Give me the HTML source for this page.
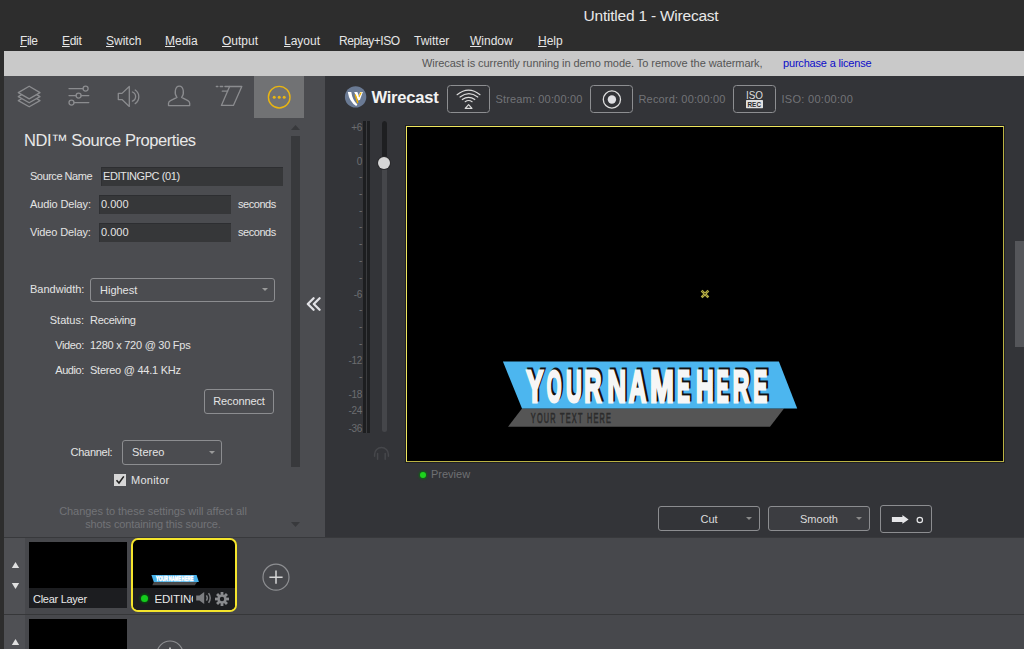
<!DOCTYPE html>
<html><head><meta charset="utf-8">
<style>
*{margin:0;padding:0;box-sizing:border-box}
html,body{width:1024px;height:649px;overflow:hidden;background:#333438;font-family:"Liberation Sans",sans-serif;}
.a{position:absolute}
.t{position:absolute;white-space:nowrap;line-height:1}
#top{left:0;top:0;width:1024px;height:51px;background:#2d2d2d}
#title{left:0;width:1024px;top:7.6px;text-align:center;padding-left:278px;color:#e8e8e8;font-size:15.5px;letter-spacing:-0.22px}
.menu{top:35px;color:#e6e6e6;font-size:12px}
.menu u{text-decoration:underline;text-decoration-thickness:1px;text-underline-offset:1px}
#lstrip{left:0;top:51px;width:4px;height:598px;background:#2d2d2d}
#banner{left:4px;top:51px;width:1020px;height:25px;background:#c9c9c9}
#lp{left:4px;top:76px;width:321px;height:461px;background:#4b4c50}
#bottom{left:4px;top:537px;width:1020px;height:112px;background:#47484c}
.lbl{color:#e4e4e4;font-size:11px}
.inp{background:#363739;border-top:1px solid #2d2e31;border-left:1px solid #2f3033}
.dd{border:1px solid #8c8d90;border-radius:3px}
.btn{border:1px solid #8c8d90;border-radius:3px}
</style></head><body>
<div id="top" class="a"></div>
<div id="title" class="t">Untitled 1 - Wirecast</div>
<div class="t menu" style="left:20px;letter-spacing:-0.45px"><u>F</u>ile</div>
<div class="t menu" style="left:62px;letter-spacing:-0.3px"><u>E</u>dit</div>
<div class="t menu" style="left:106px"><u>S</u>witch</div>
<div class="t menu" style="left:165px"><u>M</u>edia</div>
<div class="t menu" style="left:222px"><u>O</u>utput</div>
<div class="t menu" style="left:284px"><u>L</u>ayout</div>
<div class="t menu" style="left:339px;letter-spacing:-0.44px">Replay+ISO</div>
<div class="t menu" style="left:414px">Twitter</div>
<div class="t menu" style="left:470px"><u>W</u>indow</div>
<div class="t menu" style="left:538px"><u>H</u>elp</div>

<div id="lstrip" class="a"></div>
<div id="banner" class="a"></div>
<div class="t" style="left:422px;top:57.5px;font-size:11px;color:#555;letter-spacing:-0.06px">Wirecast is currently running in demo mode. To remove the watermark,</div>
<div class="t" style="left:783px;top:57.5px;font-size:11px;color:#0c0cc8;letter-spacing:-0.18px">purchase a license</div>

<div id="lp" class="a"></div>



<!-- tab icons -->
<svg class="a" style="left:0;top:76px" width="325" height="42" viewBox="0 76 325 42">
 <g fill="none" stroke="#8b8c8f" stroke-width="1.3" stroke-linejoin="round" stroke-linecap="round">
  <path d="M29.2 86.2 L40 92.6 L29.2 98.9 L18.3 92.6 Z"/>
  <path d="M21.6 94.6 L18.3 96.6 L29.2 102.8 L40 96.6 L36.8 94.6"/>
  <path d="M21.6 98.7 L18.3 100.6 L29.2 106.8 L40 100.6 L36.8 98.7"/>
  <path d="M69 88.6 H83.1 M69 95.6 H76.1 M81.1 95.6 H88.8 M74 102.6 H88.8"/>
  <circle cx="85.6" cy="88.6" r="2.5"/><circle cx="78.6" cy="95.6" r="2.5"/><circle cx="71.5" cy="102.6" r="2.5"/>
  <path d="M118.3 93.4 H122 L129.3 86.5 V106.4 L122 99.6 H118.3 Z"/>
  <path d="M132.4 92 A4.9 4.9 0 0 1 132.4 101.2"/>
  <path d="M135.2 90 A8.2 8.2 0 0 1 135.2 103.6"/>
  
  <path d="M177 97.4 C174.2 94.6 174.6 86.1 179.3 86.1 C184 86.1 184.4 94.6 181.6 97.4 L187.9 100.6 Q189.7 101.6 189.7 103.2 V105.6 H168.5 V103.2 Q168.5 101.6 170.5 100.6 Z"/>
  <path d="M229.6 86.5 H241.8 L233.4 105.4 H221.4 Z"/><path d="M222.3 91.2 H227.6"/>
  <path d="M216.4 86.5 H217.8 M220.3 86.5 H222.6 M225 86.5 H229.6" stroke-width="1.5"/>
 </g>
 <rect x="254" y="76" width="50" height="42" fill="#717274"/>
 <circle cx="279.2" cy="97.2" r="10.8" fill="none" stroke="#e9b512" stroke-width="1.4"/>
 <circle cx="274.2" cy="97.3" r="1.5" fill="#e9b512"/><circle cx="279.2" cy="97.3" r="1.5" fill="#e9b512"/><circle cx="284.2" cy="97.3" r="1.5" fill="#e9b512"/>
</svg>
<!-- scrollbar -->
<svg class="a" style="left:288px;top:120px" width="16" height="420">
 <path d="M3 10 L7.5 5 L12 10 Z" fill="#38393c"/>
 <rect x="3" y="16" width="9" height="331" fill="#38393c"/>
 <path d="M3 402 L12 402 L7.5 407 Z" fill="#38393c"/>
</svg>
<svg class="a" style="left:300px;top:290px" width="25" height="26" viewBox="300 290 25 26"><path d="M313.6 298.2 L307.8 304 L313.6 309.8 M319.6 298.2 L313.8 304 L319.6 309.8" fill="none" stroke="#e2e2e6" stroke-width="2.3" stroke-linecap="round" stroke-linejoin="round"/></svg>

<div class="t" style="left:24px;top:132px;font-size:16px;color:#e8e8e8;font-size:16.5px;letter-spacing:-0.45px;top:131.5px">NDI&trade; Source Properties</div>
<div class="t lbl" style="left:30px;top:171px;letter-spacing:-0.47px">Source Name</div>
<div class="a inp" style="left:101px;top:167px;width:182px;height:19px"></div>
<div class="t lbl" style="left:103px;top:171px;letter-spacing:-0.42px">EDITINGPC (01)</div>
<div class="t lbl" style="left:30px;top:199px;letter-spacing:-0.12px">Audio Delay:</div>
<div class="a inp" style="left:99px;top:195px;width:132px;height:19px"></div>
<div class="t lbl" style="left:101px;top:199px">0.000</div>
<div class="t lbl" style="left:238px;top:199px;letter-spacing:-0.45px">seconds</div>
<div class="t lbl" style="left:30px;top:227px;letter-spacing:-0.12px">Video Delay:</div>
<div class="a inp" style="left:99px;top:223px;width:132px;height:19px"></div>
<div class="t lbl" style="left:101px;top:227px">0.000</div>
<div class="t lbl" style="left:238px;top:227px;letter-spacing:-0.45px">seconds</div>

<div class="t lbl" style="left:30px;top:284px">Bandwidth:</div>
<div class="a dd" style="left:90px;top:278px;width:185px;height:24px"></div>
<div class="t lbl" style="left:100px;top:285px">Highest</div>
<svg class="a" style="left:262px;top:288px" width="6" height="4"><path d="M0 0 H6 L3 3 Z" fill="#9a9a9a"/></svg>

<div class="t lbl" style="left:0;width:84px;text-align:right;top:315px">Status:</div>
<div class="t lbl" style="left:90px;top:315px;letter-spacing:-0.3px">Receiving</div>
<div class="t lbl" style="left:0;width:84px;text-align:right;letter-spacing:-0.3px;top:340px;letter-spacing:-0.38px">Video:</div>
<div class="t lbl" style="left:90px;top:340px;letter-spacing:-0.26px">1280 x 720 @ 30 Fps</div>
<div class="t lbl" style="left:0;width:84px;text-align:right;letter-spacing:-0.3px;top:365px;letter-spacing:-0.4px">Audio:</div>
<div class="t lbl" style="left:90px;top:365px;letter-spacing:-0.25px">Stereo @ 44.1 KHz</div>

<div class="a btn" style="left:204px;top:389px;width:70px;height:25px"></div>
<div class="t lbl" style="left:204px;width:70px;text-align:center;top:396px;letter-spacing:-0.1px">Reconnect</div>

<div class="t lbl" style="left:0;width:112.4px;text-align:right;top:447px;letter-spacing:-0.28px">Channel:</div>
<div class="a dd" style="left:122px;top:440px;width:100px;height:25px"></div>
<div class="t lbl" style="left:132px;top:447px">Stereo</div>
<svg class="a" style="left:209px;top:451px" width="6" height="4"><path d="M0 0 H6 L3 3 Z" fill="#9a9a9a"/></svg>

<div class="a" style="left:114px;top:474px;width:12px;height:12px;background:#d6d6d6"></div>
<svg class="a" style="left:114px;top:474px" width="12" height="12"><path d="M2.5 6.2 L5 9 L9.8 2.4" fill="none" stroke="#222" stroke-width="1.6"/></svg>
<div class="t lbl" style="left:131px;top:475px;letter-spacing:0.25px">Monitor</div>

<div class="t lbl" style="left:0;width:306px;text-align:center;top:506px;color:#727377;letter-spacing:-0.04px">Changes to these settings will affect all</div>
<div class="t lbl" style="left:0;width:306px;text-align:center;top:519px;color:#727377;letter-spacing:-0.11px;top:518.5px">shots containing this source.</div>


<!-- top toolbar -->
<svg class="a" style="left:340px;top:80px" width="540" height="36" viewBox="340 80 540 36">
 <circle cx="355.6" cy="96.9" r="10.7" fill="#6a7a94"/>
 <path d="M347.8 92 L351.3 92 Q352.4 100.2 357.4 104.4 L356.2 106 Q349.2 101.8 347.8 92 Z" fill="#fff"/>
 <path d="M354.2 92 L357.4 92 L360.2 99.8 L358.2 100.6 Z" fill="#fff"/>
 <path d="M354.5 94.6 L355.9 94.6 L358.4 102.6 L357.2 103.6 Z" fill="#f2b300"/>
 <path d="M360 92 L362.9 92 L359.9 100 L357.9 99.6 Z" fill="#fff"/>
 <path d="M360.3 92.6 L361.8 92.6 L359.3 97.6 L358.6 96.6 Z" fill="#f2b300"/>
 <rect x="447.5" y="85.5" width="42" height="27" rx="3" fill="none" stroke="#8d8e91" stroke-width="1"/>
 <g fill="none" stroke="#dcdcdc" stroke-width="1.2" stroke-linecap="round">
  <path d="M457.1 94.7 Q468.6 85.6 480 94.7"/>
  <path d="M460 97 Q468.9 90.1 477.8 97"/>
  <path d="M462.3 99.5 Q468.6 95.1 474.8 99.5"/>
  <path d="M465.2 101.7 Q468.6 99.3 472.1 101.7"/>
 </g>
 <path d="M468.6 104.6 L472 108.3 H465.2 Z" fill="none" stroke="#dcdcdc" stroke-width="1.2" stroke-linejoin="round"/>
 <rect x="590.5" y="85.5" width="42" height="27" rx="3" fill="none" stroke="#8d8e91" stroke-width="1"/>
 <circle cx="611.9" cy="99.5" r="8.6" fill="none" stroke="#dcdcdc" stroke-width="1.3"/>
 <circle cx="611.9" cy="99.5" r="4.2" fill="#e0e0e4"/>
 <rect x="733.5" y="85.5" width="42" height="27" rx="3" fill="none" stroke="#8d8e91" stroke-width="1"/>
 <rect x="746" y="100" width="17" height="8.2" rx="0.6" fill="#e0e0e0"/>
</svg>
<div class="t" style="left:371.4px;top:89.8px;font-size:16.6px;font-weight:bold;color:#f2f2f2;letter-spacing:-0.25px">Wirecast</div>
<div class="t" style="left:745.6px;top:90.1px;font-size:11.5px;color:#dedede;transform:scaleX(0.86);transform-origin:0 0">ISO</div>
<div class="t" style="left:747.5px;top:101.6px;font-size:6.4px;font-weight:bold;color:#2a2a2c">REC</div>
<div class="t" style="left:495.5px;top:94px;font-size:11px;color:#727377;letter-spacing:0.16px">Stream: 00:00:00</div>
<div class="t" style="left:638.5px;top:94px;font-size:11px;color:#727377;letter-spacing:0.16px">Record: 00:00:00</div>
<div class="t" style="left:781.5px;top:94px;font-size:11px;color:#727377;letter-spacing:0.29px">ISO: 00:00:00</div>

<!-- audio meter -->
<div class="a" style="left:363px;top:121px;width:7px;height:312px;background:#1d1e20"></div>
<div class="a" style="left:366px;top:121px;width:1px;height:312px;background:#3a3b3e"></div>
<div class="a" style="left:382px;top:121px;width:5px;height:311px;border-radius:2.5px;background:#45464a"></div>
<div class="a" style="left:382px;top:121px;width:5px;height:42px;border-radius:2.5px 2.5px 0 0;background:#1e1f21"></div>
<div class="a" style="left:377.7px;top:156.6px;width:12.2px;height:12.2px;border-radius:50%;background:#d6d6d6;box-shadow:0 0 0 1px #2a2a2c"></div>
<div class="t" style="left:300px;width:62px;text-align:right;letter-spacing:-0.3px;top:122.8px;font-size:10px;color:#6c6d70">+6</div>
<div class="t" style="left:300px;width:62px;text-align:right;letter-spacing:-0.3px;top:139.1px;font-size:10px;color:#6c6d70">-</div>
<div class="t" style="left:300px;width:62px;text-align:right;letter-spacing:-0.3px;top:156.7px;font-size:10px;color:#6c6d70">0</div>
<div class="t" style="left:300px;width:62px;text-align:right;letter-spacing:-0.3px;top:171.9px;font-size:10px;color:#6c6d70">-</div>
<div class="t" style="left:300px;width:62px;text-align:right;letter-spacing:-0.3px;top:188.5px;font-size:10px;color:#6c6d70">-</div>
<div class="t" style="left:300px;width:62px;text-align:right;letter-spacing:-0.3px;top:205.7px;font-size:10px;color:#6c6d70">-</div>
<div class="t" style="left:300px;width:62px;text-align:right;letter-spacing:-0.3px;top:222.3px;font-size:10px;color:#6c6d70">-</div>
<div class="t" style="left:300px;width:62px;text-align:right;letter-spacing:-0.3px;top:239.3px;font-size:10px;color:#6c6d70">-</div>
<div class="t" style="left:300px;width:62px;text-align:right;letter-spacing:-0.3px;top:255.6px;font-size:10px;color:#6c6d70">-</div>
<div class="t" style="left:300px;width:62px;text-align:right;letter-spacing:-0.3px;top:272.5px;font-size:10px;color:#6c6d70">-</div>
<div class="t" style="left:300px;width:62px;text-align:right;letter-spacing:-0.3px;top:290.1px;font-size:10px;color:#6c6d70">-6</div>
<div class="t" style="left:300px;width:62px;text-align:right;letter-spacing:-0.3px;top:305.3px;font-size:10px;color:#6c6d70">-</div>
<div class="t" style="left:300px;width:62px;text-align:right;letter-spacing:-0.3px;top:321.8px;font-size:10px;color:#6c6d70">-</div>
<div class="t" style="left:300px;width:62px;text-align:right;letter-spacing:-0.3px;top:338.8px;font-size:10px;color:#6c6d70">-</div>
<div class="t" style="left:300px;width:62px;text-align:right;letter-spacing:-0.3px;top:356.2px;font-size:10px;color:#6c6d70">-12</div>
<div class="t" style="left:300px;width:62px;text-align:right;letter-spacing:-0.3px;top:372.2px;font-size:10px;color:#6c6d70">-</div>
<div class="t" style="left:300px;width:62px;text-align:right;letter-spacing:-0.3px;top:390.1px;font-size:10px;color:#6c6d70">-18</div>
<div class="t" style="left:300px;width:62px;text-align:right;letter-spacing:-0.3px;top:406.0px;font-size:10px;color:#6c6d70">-24</div>
<div class="t" style="left:300px;width:62px;text-align:right;letter-spacing:-0.3px;top:423.8px;font-size:10px;color:#6c6d70">-36</div>
<svg class="a" style="left:368px;top:440px" width="28" height="26" viewBox="368 440 28 26"><path d="M374.6 456.2 V454.4 A6.9 6.9 0 0 1 388.4 454.4 V456.2" fill="none" stroke="#46474b" stroke-width="1.5" stroke-linecap="round"/><path d="M377.6 453.6 V459.2 M385.2 453.6 V459.2" stroke="#46474b" stroke-width="1.5" stroke-linecap="round"/></svg>

<!-- preview -->
<div class="a" style="left:405px;top:125px;width:600px;height:338px;border:1px solid #1f2022"></div>
<div class="a" style="left:406px;top:126px;width:598px;height:336px;background:#000;border:1px solid #efe65e;border-right-color:#bab244;border-bottom-color:#bab244"></div>
<svg class="a" style="left:700px;top:289px" width="10" height="10"><path d="M1.6 1.6 L8.4 8.4 M8.4 1.6 L1.6 8.4" stroke="#b4ac44" stroke-width="2.6"/><path d="M2.4 2.4 L7.6 7.6 M7.6 2.4 L2.4 7.6" stroke="#2a2a10" stroke-width="0.8" stroke-dasharray="1.2 1.2"/></svg>

<svg class="a" style="left:490px;top:350px" width="320" height="90" viewBox="490 350 320 90">
 <polygon points="522,408.5 784,408.5 770,426.8 508,426.8" fill="#555555"/>
 <polygon points="502.9,361.6 778.9,361.6 797.2,408.5 522,408.5" fill="#4cb6ef"/>
</svg>
<svg class="a" style="left:0;top:0" width="1024" height="649" viewBox="0 0 1024 649"><g transform="translate(530.8 423.4) scale(0.5 1)"><text font-family="Liberation Sans" font-size="14.6" letter-spacing="2.45" word-spacing="0.4" fill="#2c2c2c" stroke="#2c2c2c" stroke-width="0.5" vector-effect="non-scaling-stroke">YOUR TEXT HERE</text></g></svg>
<svg class="a" style="left:0;top:0" width="1024" height="649" viewBox="0 0 1024 649"><g font-family="Liberation Sans" font-weight="bold" font-size="44" fill="#111" stroke="#111" stroke-width="2.4"><g transform="translate(527.94 400.30) scale(0.583 1)"><text vector-effect="non-scaling-stroke">Y</text></g><g transform="translate(548.60 400.30) scale(0.432 1)"><text vector-effect="non-scaling-stroke">O</text></g><g transform="translate(567.69 400.30) scale(0.495 1)"><text vector-effect="non-scaling-stroke">U</text></g><g transform="translate(585.93 400.30) scale(0.540 1)"><text vector-effect="non-scaling-stroke">R</text></g><g transform="translate(609.08 400.30) scale(0.591 1)"><text vector-effect="non-scaling-stroke">N</text></g><g transform="translate(630.67 400.30) scale(0.553 1)"><text vector-effect="non-scaling-stroke">A</text></g><g transform="translate(651.91 400.30) scale(0.649 1)"><text vector-effect="non-scaling-stroke">M</text></g><g transform="translate(678.83 400.30) scale(0.437 1)"><text vector-effect="non-scaling-stroke">E</text></g><g transform="translate(697.69 400.30) scale(0.553 1)"><text vector-effect="non-scaling-stroke">H</text></g><g transform="translate(718.20 400.30) scale(0.412 1)"><text vector-effect="non-scaling-stroke">E</text></g><g transform="translate(734.48 400.30) scale(0.522 1)"><text vector-effect="non-scaling-stroke">R</text></g><g transform="translate(755.13 400.30) scale(0.473 1)"><text vector-effect="non-scaling-stroke">E</text></g></g><g font-family="Liberation Sans" font-weight="bold" font-size="44" fill="#f6f6f6" stroke="#f6f6f6" stroke-width="2.4"><g transform="translate(526.14 402.10) scale(0.583 1)"><text vector-effect="non-scaling-stroke">Y</text></g><g transform="translate(546.80 402.10) scale(0.432 1)"><text vector-effect="non-scaling-stroke">O</text></g><g transform="translate(565.89 402.10) scale(0.495 1)"><text vector-effect="non-scaling-stroke">U</text></g><g transform="translate(584.13 402.10) scale(0.540 1)"><text vector-effect="non-scaling-stroke">R</text></g><g transform="translate(607.28 402.10) scale(0.591 1)"><text vector-effect="non-scaling-stroke">N</text></g><g transform="translate(628.87 402.10) scale(0.553 1)"><text vector-effect="non-scaling-stroke">A</text></g><g transform="translate(650.11 402.10) scale(0.649 1)"><text vector-effect="non-scaling-stroke">M</text></g><g transform="translate(677.03 402.10) scale(0.437 1)"><text vector-effect="non-scaling-stroke">E</text></g><g transform="translate(695.89 402.10) scale(0.553 1)"><text vector-effect="non-scaling-stroke">H</text></g><g transform="translate(716.40 402.10) scale(0.412 1)"><text vector-effect="non-scaling-stroke">E</text></g><g transform="translate(732.68 402.10) scale(0.522 1)"><text vector-effect="non-scaling-stroke">R</text></g><g transform="translate(753.33 402.10) scale(0.473 1)"><text vector-effect="non-scaling-stroke">E</text></g></g></svg>
<div class="a" style="left:420px;top:471.5px;width:6px;height:6px;border-radius:50%;background:#1ed21e;box-shadow:0 0 2px 1px #0a6a10"></div>
<div class="t" style="left:431px;top:469px;font-size:11px;color:#6f7073">Preview</div>

<div class="a" style="left:1015px;top:241px;width:9px;height:106px;background:#55565a"></div>

<!-- transitions -->
<div class="a btn" style="left:658px;top:506px;width:102px;height:25px;background:#333438"></div>
<div class="t lbl" style="left:658px;width:102px;text-align:center;top:513px;padding-right:0px;color:#dcdcdc;top:513.7px">Cut</div>
<svg class="a" style="left:746px;top:517px" width="6" height="4"><path d="M0 0 H6 L3 3 Z" fill="#8a8a8a"/></svg>
<div class="a btn" style="left:768px;top:506px;width:102px;height:25px;background:#3c3d41"></div>
<div class="t lbl" style="left:768px;width:102px;text-align:center;top:513px;color:#dcdcdc;top:513.7px">Smooth</div>
<svg class="a" style="left:856px;top:517px" width="6" height="4"><path d="M0 0 H6 L3 3 Z" fill="#8a8a8a"/></svg>
<div class="a btn" style="left:880px;top:505px;width:52px;height:28px"></div>
<svg class="a" style="left:880px;top:505px" width="52" height="28"><path d="M11.9 12 H22.4 V10 L28.6 14.4 L22.4 18.8 V16.9 H11.9 Z" fill="#e6e6e8"/><circle cx="39.8" cy="15" r="2.7" fill="none" stroke="#e6e6e8" stroke-width="1.2"/></svg>


<div id="bottom" class="a"></div>
<div class="a" style="left:4px;top:537px;width:1020px;height:1px;background:#38393c"></div>
<div class="a" style="left:4px;top:538px;width:21px;height:76px;background:#4f5054"></div>
<div class="a" style="left:4px;top:614px;width:1020px;height:1px;background:#363739"></div>
<div class="a" style="left:4px;top:615px;width:21px;height:34px;background:#4f5054"></div>
<svg class="a" style="left:0;top:540px" width="30" height="109">
 <path d="M11.8 28 L15.5 22 L19.2 28 Z" fill="#e0e0e0"/>
 <path d="M11.8 43 L19.2 43 L15.5 49 Z" fill="#e0e0e0"/>
 <path d="M11.8 105 L15.5 99 L19.2 105 Z" fill="#e0e0e0"/>
</svg>
<div class="a" style="left:29px;top:542px;width:98px;height:66px;background:#000"></div>
<div class="a" style="left:29px;top:588px;width:98px;height:20px;background:#1c1d20"></div>
<div class="t" style="left:33px;top:593px;font-size:11px;color:#e8e8e8;letter-spacing:-0.28px;top:594px">Clear Layer</div>
<div class="a" style="left:29px;top:619px;width:98px;height:30px;background:#000"></div>

<div class="a" style="left:131px;top:538px;width:105.5px;height:73.6px;border:2.6px solid #f4e42c;border-radius:7px;background:#000;overflow:hidden">
  <div class="a" style="left:0;top:47.6px;width:102px;height:23px;background:#1c1d20"></div>
</div>
<svg class="a" style="left:140px;top:570px" width="70" height="20" viewBox="140 570 70 20">
 <polygon points="153.8,582.1 197.1,582.1 194.8,585.3 152.3,585.3" fill="#4a4a4a"/>
 <polygon points="151.4,575 196.6,575 198.9,582.1 153.8,582.1" fill="#47b1ea"/>
</svg>
<svg class="a" style="left:0;top:0" width="1024" height="649" viewBox="0 0 1024 649"><g transform="translate(156 581.4) scale(0.6 1)"><text font-family="Liberation Sans" font-weight="bold" font-size="7" word-spacing="-1" fill="#ffffff" stroke="#ffffff" stroke-width="0.5" vector-effect="non-scaling-stroke">YOUR NAME HERE</text></g></svg>
<div class="a" style="left:141px;top:594.6px;width:7px;height:7px;border-radius:50%;background:#14cc1c;box-shadow:0 0 2px 1.5px #0a4a10"></div>
<div class="a" style="left:154.5px;top:592px;width:38.5px;height:15px;overflow:hidden"><div class="t" style="left:0;top:1.6px;font-size:11.5px;color:#e8e8e8;letter-spacing:-0.2px">EDITINGPC</div></div>
<svg class="a" style="left:194px;top:589px" width="40" height="18">
 <path d="M2.2 6.6 H5.4 L10.2 3 V15 L5.4 11.4 H2.2 Z" fill="#7c7d80"/>
 <path d="M12.4 6.4 Q14.2 9 12.4 11.6 M14.6 4.2 Q17.8 9 14.6 13.8" fill="none" stroke="#7c7d80" stroke-width="1.5"/>
 <g transform="translate(28 10.00)" fill="#8a8b8e">
  <circle r="4.6"/>
  <g id="teeth"><rect x="-1.4" y="-7" width="2.8" height="14"/><rect x="-1.4" y="-7" width="2.8" height="14" transform="rotate(45)"/><rect x="-1.4" y="-7" width="2.8" height="14" transform="rotate(90)"/><rect x="-1.4" y="-7" width="2.8" height="14" transform="rotate(135)"/></g>
  <circle r="2.2" fill="#1c1d20"/>
 </g>
</svg>
<svg class="a" style="left:260px;top:562px" width="32" height="32"><circle cx="16" cy="15.2" r="13" fill="none" stroke="#8e8f92" stroke-width="1.2"/><path d="M16 8.6 V21.8 M9.4 15.2 H22.6" stroke="#d6d6d6" stroke-width="1.5"/></svg>
<svg class="a" style="left:150px;top:638px" width="40" height="11"><circle cx="20" cy="16" r="13" fill="none" stroke="#8e8f92" stroke-width="1.2"/><path d="M20 9.4 V16" stroke="#d6d6d6" stroke-width="1.5"/></svg>

</body></html>
